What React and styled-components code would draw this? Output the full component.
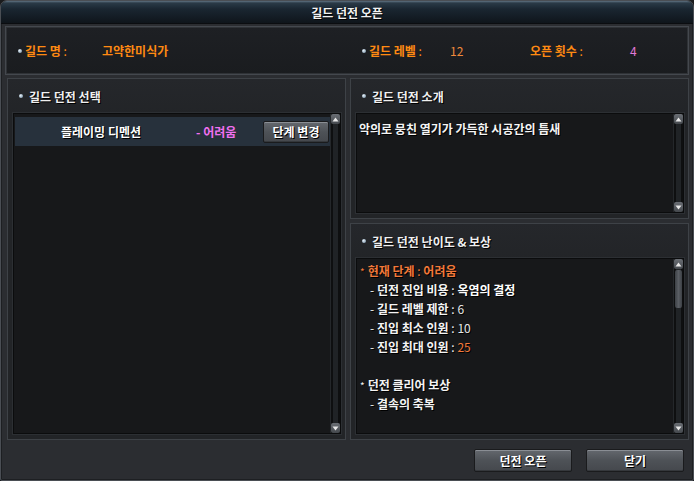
import React from "react";
import styled, { createGlobalStyle } from "styled-components";

const GlobalStyle = createGlobalStyle`
  html, body { margin: 0; padding: 0; background: #1a1b1d; }
  body {
    font-family: "Noto Sans CJK KR", "Noto Sans", sans-serif;
    font-size: 12px;
  }
`;

const rewards = [
  { label: "던전 진입 비용", value: "옥염의 결정", valueColor: "#ffffff", bold: true },
  { label: "길드 레벨 제한", value: "6", valueColor: "#e6e6e6" },
  { label: "진입 최소 인원", value: "10", valueColor: "#e6e6e6" },
  { label: "진입 최대 인원", value: "25", valueColor: "#f2793a" },
];

function ScrollBar({ thumb }) {
  return (
    <Track>
      <Arrow>
        <svg width="7" height="5" viewBox="0 0 7 5"><path d="M3.5 0.5 L6.5 4.5 L0.5 4.5 Z" fill="#e8e8e8" /></svg>
      </Arrow>
      <Rail>{thumb && <Thumb />}</Rail>
      <Arrow>
        <svg width="7" height="5" viewBox="0 0 7 5"><path d="M0.5 0.5 L6.5 0.5 L3.5 4.5 Z" fill="#e8e8e8" /></svg>
      </Arrow>
    </Track>
  );
}

function App() {
  return (
    <>
      <GlobalStyle />
      <Window>
        <TitleBar>길드 던전 오픈</TitleBar>
        <Body>
          <InfoBar>
            <InfoGroup $width={344}>
              <Bullet />
              <InfoLabel $width={77}>길드 명 <Thin>:</Thin></InfoLabel>
              <InfoValue $color="#ff8a12" $bold>고약한미식가</InfoValue>
            </InfoGroup>
            <InfoGroup $width={168}>
              <Bullet />
              <InfoLabel $width={81}>길드 레벨 <Thin>:</Thin></InfoLabel>
              <InfoValue $color="#f08a3c">12</InfoValue>
            </InfoGroup>
            <InfoGroup>
              <InfoLabel $width={100}>오픈 횟수 <Thin>:</Thin></InfoLabel>
              <InfoValue $color="#e07ad8">4</InfoValue>
            </InfoGroup>
          </InfoBar>

          <Columns>
            <Panel>
              <PanelHead><Bullet />길드 던전 선택</PanelHead>
              <Box>
                <BoxContent $pad="3px 0 0 1px">
                  <DungeonRow>
                    <DungeonName>플레이밍 디멘션</DungeonName>
                    <Difficulty>- 어려움</Difficulty>
                    <SmallButton>단계 변경</SmallButton>
                  </DungeonRow>
                </BoxContent>
                <ScrollBar />
              </Box>
            </Panel>

            <RightColumn>
              <Panel $grow={0} $height={141}>
                <PanelHead><Bullet />길드 던전 소개</PanelHead>
                <Box>
                  <BoxContent $pad="5px 2px">
                    <Line>악의로 뭉친 열기가 가득한 시공간의 틈새</Line>
                  </BoxContent>
                  <ScrollBar />
                </Box>
              </Panel>

              <Panel>
                <PanelHead><Bullet />길드 던전 난이도 &amp; 보상</PanelHead>
                <Box>
                  <BoxContent $pad="2px 3px">
                    <Line $color="#f2793a"><Star>*</Star>현재 단계 <Thin>:</Thin> 어려움</Line>
                    {rewards.map((r) => (
                      <Line key={r.label} $indent>
                        <Thin>-</Thin> {r.label} <Thin>:</Thin>{" "}
                        <Value $color={r.valueColor} $bold={r.bold}>{r.value}</Value>
                      </Line>
                    ))}
                    <Line />
                    <Line><Star>*</Star>던전 클리어 보상</Line>
                    <Line $indent><Thin>-</Thin> 결속의 축복</Line>
                  </BoxContent>
                  <ScrollBar thumb />
                </Box>
              </Panel>
            </RightColumn>
          </Columns>

          <Footer>
            <BigButton>던전 오픈</BigButton>
            <BigButton>닫기</BigButton>
          </Footer>
        </Body>
      </Window>
    </>
  );
}

const Window = styled.div`
  width: 694px;
  height: 481px;
  box-sizing: border-box;
  display: flex;
  flex-direction: column;
  background: #2b2d31;
  border: 1px solid #4a4e54;
  border-radius: 7px 7px 2px 2px;
  overflow: hidden;
  box-shadow: inset 0 0 0 1px #1d1f22;
`;

const TitleBar = styled.div`
  height: 22px;
  flex: none;
  display: flex;
  align-items: center;
  justify-content: center;
  color: #f2f2f2;
  font-weight: bold;
  font-size: 12px;
  text-shadow: 1px 1px 0 #000;
  background: linear-gradient(#5f7282 0px, #2a3a47 2px, #1a2631 8px, #0f151b 100%);
  border-bottom: 1px solid #0b0d10;
`;

const Body = styled.div`
  flex: 1;
  display: flex;
  flex-direction: column;
  padding: 2px 4px 0 4px;
`;

const InfoBar = styled.div`
  height: 47px;
  display: flex;
  align-items: center;
  padding-left: 12px;
  background: linear-gradient(#1e2024, #1a1c1f);
  border: 1px solid #44484e;
  box-shadow: inset 0 0 0 1px #2f3236;
`;

const InfoGroup = styled.div`
  display: flex;
  align-items: center;
  width: ${(p) => (p.$width ? `${p.$width}px` : "auto")};
  flex: none;
`;

const InfoLabel = styled.span`
  width: ${(p) => p.$width}px;
  color: #ff8a12;
  font-weight: bold;
  white-space: pre;
`;

const InfoValue = styled.span`
  color: ${(p) => p.$color};
  font-weight: ${(p) => (p.$bold ? "bold" : "normal")};
`;

const Bullet = styled.span`
  width: 4px;
  height: 4px;
  border-radius: 50%;
  margin-right: 3px;
  flex: none;
  background: radial-gradient(circle at 35% 35%, #e6f0f8, #6e8aa0);
`;

const Columns = styled.div`
  flex: none;
  height: 362px;
  margin: 3px 1px 0 2px;
  display: grid;
  grid-template-columns: 339px 339px;
  gap: 4px;
`;

const RightColumn = styled.div`
  display: flex;
  flex-direction: column;
  gap: 4px;
`;

const Panel = styled.div`
  box-sizing: border-box;
  display: flex;
  flex-direction: column;
  flex: ${(p) => (p.$grow === 0 ? "none" : 1)};
  height: ${(p) => (p.$height ? `${p.$height}px` : "auto")};
  background: linear-gradient(#25272b, #222427 40px);
  border: 1px solid #3e4247;
  padding: 0 4px 5px 5px;
`;

const PanelHead = styled.div`
  height: 34px;
  flex: none;
  display: flex;
  align-items: center;
  padding-left: 6px;
  gap: 3px;
  color: #f0f0f0;
  font-weight: bold;
  text-shadow: 1px 1px 0 #000;
`;

const Box = styled.div`
  flex: 1;
  display: flex;
  min-height: 0;
  background: #17181a;
  border: 1px solid #0b0c0d;
  box-shadow: 0 0 0 1px #2c2f33;
`;

const BoxContent = styled.div`
  flex: 1;
  padding: ${(p) => p.$pad};
`;

const Track = styled.div`
  width: 9px;
  flex: none;
  display: flex;
  flex-direction: column;
  background: #0e0f10;
  border-left: 1px solid #24272a;
`;

const Arrow = styled.div`
  height: 10px;
  display: flex;
  align-items: center;
  justify-content: center;
  background: linear-gradient(#6a6e74, #44484d);
  border-radius: 2px;
`;

const Rail = styled.div`
  flex: 1;
  padding-top: 1px;
  background: linear-gradient(90deg, #0e0f10 0 2px, #202326 2px 7px, #0e0f10 7px);
`;

const Thumb = styled.div`
  height: 38px;
  margin: 0 1px;
  border-radius: 2px;
  background: linear-gradient(90deg, #3c4045, #5a5e64 50%, #3c4045);
`;

const DungeonRow = styled.div`
  height: 29px;
  display: flex;
  align-items: center;
  background: #27313c;
`;

const DungeonName = styled.span`
  margin-left: 46px;
  width: 135px;
  color: #ffffff;
  font-weight: bold;
  text-shadow: 1px 1px 0 #000;
`;

const Difficulty = styled.span`
  width: 67px;
  color: #f070f0;
  font-weight: bold;
`;

const buttonBase = `
  box-sizing: border-box;
  display: flex;
  align-items: center;
  justify-content: center;
  color: #ffffff;
  font-family: inherit;
  font-weight: bold;
  font-size: 12px;
  text-shadow: 1px 1px 0 #000;
  background: linear-gradient(#64686e, #4e5257 50%, #45484d);
  border: 1px solid #1a1b1d;
  box-shadow: inset 0 1px 0 #8a8e94, inset 0 -1px 0 #35383c;
  border-radius: 2px;
  padding: 0;
`;

const SmallButton = styled.button`
  ${buttonBase}
  width: 66px;
  height: 22px;
`;

const BigButton = styled.button`
  ${buttonBase}
  width: 98px;
  height: 23px;
`;

const Line = styled.div`
  height: 19px;
  line-height: 19px;
  white-space: pre;
  padding-left: ${(p) => (p.$indent ? "10px" : "0")};
  color: ${(p) => p.$color || "#f4f4f4"};
  font-weight: bold;
  text-shadow: 1px 1px 0 #000;
`;

const Star = styled.span`
  font-weight: normal;
  font-size: 10px;
  margin-right: 3px;
`;

const Thin = styled.span`
  font-weight: normal;
  color: inherit;
`;

const Value = styled.span`
  color: ${(p) => p.$color};
  font-weight: ${(p) => (p.$bold ? "bold" : "normal")};
`;

const Footer = styled.div`
  flex: 1;
  display: flex;
  align-items: flex-start;
  justify-content: flex-end;
  gap: 14px;
  padding: 9px 5px 0 0;
`;

export default App;
